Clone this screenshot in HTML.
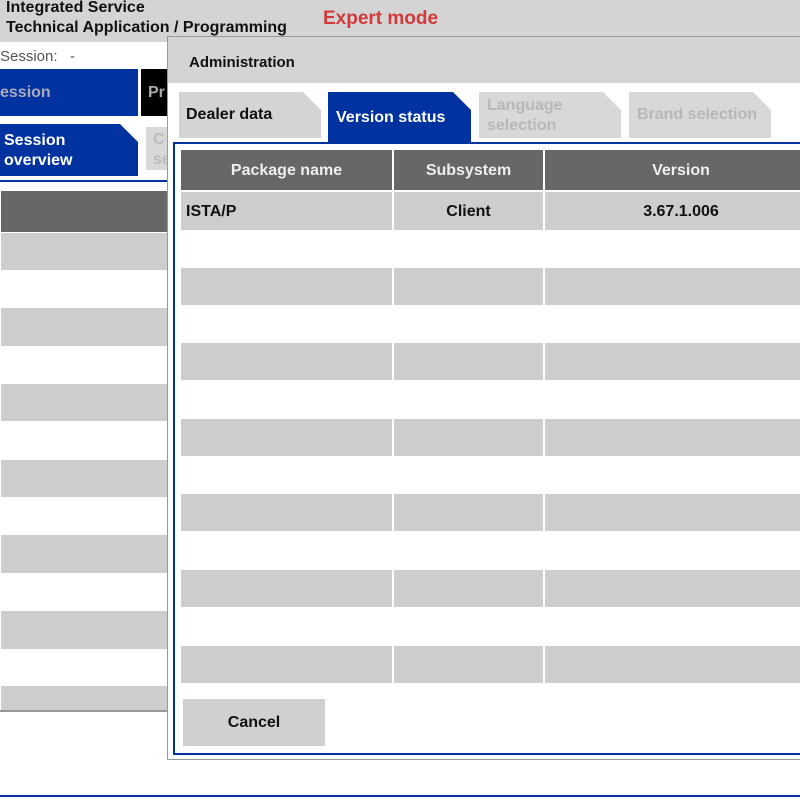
<!DOCTYPE html>
<html><head><style>
*{margin:0;padding:0;box-sizing:border-box}
body{width:800px;height:800px;overflow:hidden;background:#fff;font-family:"Liberation Sans",Arial,sans-serif;font-weight:bold;position:relative}
.a{position:absolute}
.t{font-size:16px;color:#111}
.cut{clip-path:polygon(0 0,calc(100% - 18px) 0,100% 18px,100% 100%,0 100%)}
</style></head><body>
<div class="a" style="left:0;top:0;width:800px;height:42px;background:#d4d4d4"></div>
<div class="a t" style="left:6px;top:-1px">Integrated Service</div>
<div class="a t" style="left:6px;top:19px">Technical Application / Programming</div>
<div class="a" style="left:323px;top:8px;font-size:19px;color:#d23a3a">Expert mode</div>
<div class="a" style="left:0;top:48px;font-size:15px;color:#555;font-weight:normal">Session:&nbsp;&nbsp; -</div>
<div class="a" style="left:0;top:69px;width:138px;height:47px;background:#0033a0;color:#aab;padding:15px 0 0 0;font-size:16px">ession</div>
<div class="a" style="left:141px;top:69px;width:40px;height:47px;background:#000;color:#aaa;padding:15px 0 0 7px;font-size:16px">Pr</div>
<div class="a cut" style="left:0;top:124px;width:138px;height:52px;background:#0033a0;color:#fff;padding:7px 0 0 4px;font-size:16px;line-height:20px">Session<br>overview</div>
<div class="a" style="left:146px;top:127px;width:30px;height:43px;background:#d8d8d8;color:#bbb;padding:3px 0 0 7px;font-size:16px;line-height:20px">C<br>se</div>
<div class="a" style="left:0;top:180px;width:170px;height:2px;background:#0033a0"></div>
<div class="a" style="left:1px;top:191px;width:167px;height:41px;background:#676767"></div>
<div class="a" style="left:1px;top:233px;width:167px;height:37px;background:#cdcdcd"></div>
<div class="a" style="left:1px;top:308px;width:167px;height:38px;background:#cdcdcd"></div>
<div class="a" style="left:1px;top:384px;width:167px;height:37px;background:#cdcdcd"></div>
<div class="a" style="left:1px;top:460px;width:167px;height:37px;background:#cdcdcd"></div>
<div class="a" style="left:1px;top:535px;width:167px;height:38px;background:#cdcdcd"></div>
<div class="a" style="left:1px;top:611px;width:167px;height:38px;background:#cdcdcd"></div>
<div class="a" style="left:1px;top:686px;width:167px;height:24px;background:#cdcdcd"></div>
<div class="a" style="left:0;top:710px;width:168px;height:2px;background:#999"></div>
<div class="a" style="left:0;top:795px;width:800px;height:2px;background:#0033a0"></div>

<div class="a" style="left:167px;top:36px;width:640px;height:724px;background:#fff;border:1px solid #999"></div>
<div class="a" style="left:168px;top:37px;width:632px;height:46px;background:#d4d4d4"></div>
<div class="a t" style="left:189px;top:54px;font-size:15px">Administration</div>
<div class="a cut" style="left:179px;top:92px;width:142px;height:46px;background:#d4d4d4;padding:14px 0 0 7px;font-size:16px;color:#111">Dealer data</div>
<div class="a cut" style="left:328px;top:92px;width:143px;height:52px;background:#0033a0;padding:17px 0 0 8px;font-size:16px;color:#fff">Version status</div>
<div class="a cut" style="left:479px;top:92px;width:142px;height:46px;background:#d8d8d8;padding:4px 0 0 8px;font-size:16px;color:#b8b8b8;line-height:20px">Language<br>selection</div>
<div class="a cut" style="left:629px;top:92px;width:142px;height:46px;background:#d8d8d8;padding:14px 0 0 8px;font-size:16px;color:#b8b8b8">Brand selection</div>
<div class="a" style="left:173px;top:142px;width:640px;height:613px;border:2px solid #0033a0"></div>
<div class="a" style="left:181px;top:150px;width:211px;height:40px;background:#676767;color:#eee;font-size:16px;text-align:center;line-height:42px">Package name</div>
<div class="a" style="left:394px;top:150px;width:149px;height:40px;background:#676767;color:#eee;font-size:16px;text-align:center;line-height:42px">Subsystem</div>
<div class="a" style="left:545px;top:150px;width:272px;height:40px;background:#676767;color:#eee;font-size:16px;text-align:center;line-height:42px">Version</div>
<div class="a" style="left:181px;top:192px;width:211px;height:38px;background:#cdcdcd;font-size:16px;color:#111;line-height:40px;padding-left:5px">ISTA/P</div>
<div class="a" style="left:394px;top:192px;width:149px;height:38px;background:#cdcdcd;font-size:16px;color:#111;line-height:40px;text-align:center">Client</div>
<div class="a" style="left:545px;top:192px;width:272px;height:38px;background:#cdcdcd;font-size:16px;color:#111;line-height:40px;text-align:center">3.67.1.006</div>
<div id="rows"></div>
<div class="a" style="left:183px;top:699px;width:142px;height:47px;background:#d0d0d0;font-size:16px;color:#111;text-align:center;line-height:48px">Cancel</div>
<script>
var h='';[268,343,419,494,570,646].forEach(function(y){
h+='<div class="a" style="left:181px;top:'+y+'px;width:211px;height:37px;background:#cdcdcd"></div>';
h+='<div class="a" style="left:394px;top:'+y+'px;width:149px;height:37px;background:#cdcdcd"></div>';
h+='<div class="a" style="left:545px;top:'+y+'px;width:272px;height:37px;background:#cdcdcd"></div>';});
document.getElementById('rows').innerHTML=h;
</script>
</body></html>
